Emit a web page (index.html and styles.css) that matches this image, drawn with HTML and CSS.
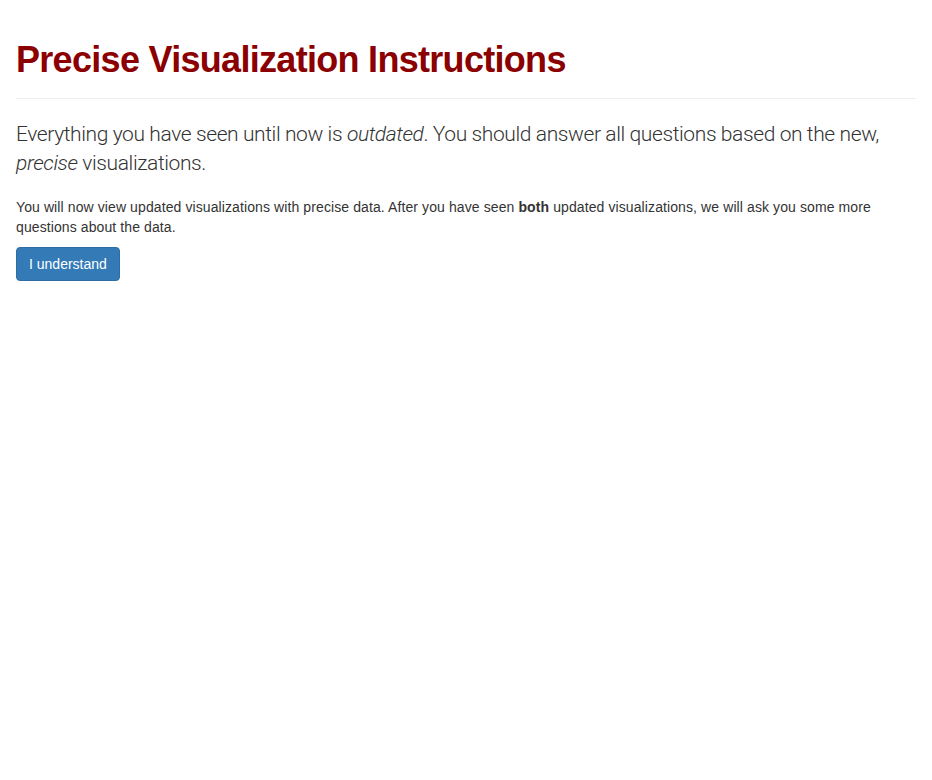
FILE: index.html
```html
<!DOCTYPE html>
<html>
<head>
<meta charset="utf-8">
<link rel="stylesheet" href="styles.css">
</head>
<body>
<div class="container">
  <div class="page-header">
    <h1 class="title">Precise Visualization Instructions</h1>
  </div>
  <p class="lead">Everything you have seen until now is <em>outdated</em>. You should answer all questions based on the new, <em>precise</em> visualizations.</p>
  <p class="text">You will now view updated visualizations with precise data. After you have seen <b>both</b> updated visualizations, we will ask you some more questions about the data.</p>
  <button class="btn btn-primary">I understand</button>
</div>
</body>
</html>
```

FILE: styles.css
```css
html, body {
  margin: 0;
  padding: 0;
  background: #fff;
}
body {
  font-family: "Liberation Sans", Arial, sans-serif;
  font-size: 14px;
  line-height: 20px;
  color: #333;
}
.container {
  padding: 0 16px;
}
.page-header {
  margin: 40px 0 21px;
  padding-bottom: 8px;
  border-bottom: 1px solid #eee;
}
.title {
  margin: 0 0 10px;
  font-size: 36px;
  line-height: 1.1;
  font-weight: 700;
  letter-spacing: -0.7px;
  color: #8b0000;
}
.lead {
  margin: 0 0 19px;
  font-family: Roboto, "Liberation Sans", sans-serif;
  font-size: 21px;
  font-weight: 300;
  line-height: 1.4;
  letter-spacing: -0.4px;
}
.text {
  margin: 0 0 10px;
  font-size: 14px;
  line-height: 20px;
  letter-spacing: 0.1px;
}
.btn {
  display: inline-block;
  padding: 6px 12px;
  font-family: "Liberation Sans", Arial, sans-serif;
  font-size: 14px;
  line-height: 20px;
  border-radius: 4px;
  border: 1px solid #2e6da4;
  cursor: pointer;
}
.btn-primary {
  color: #fff;
  background: #337ab7;
}
```
